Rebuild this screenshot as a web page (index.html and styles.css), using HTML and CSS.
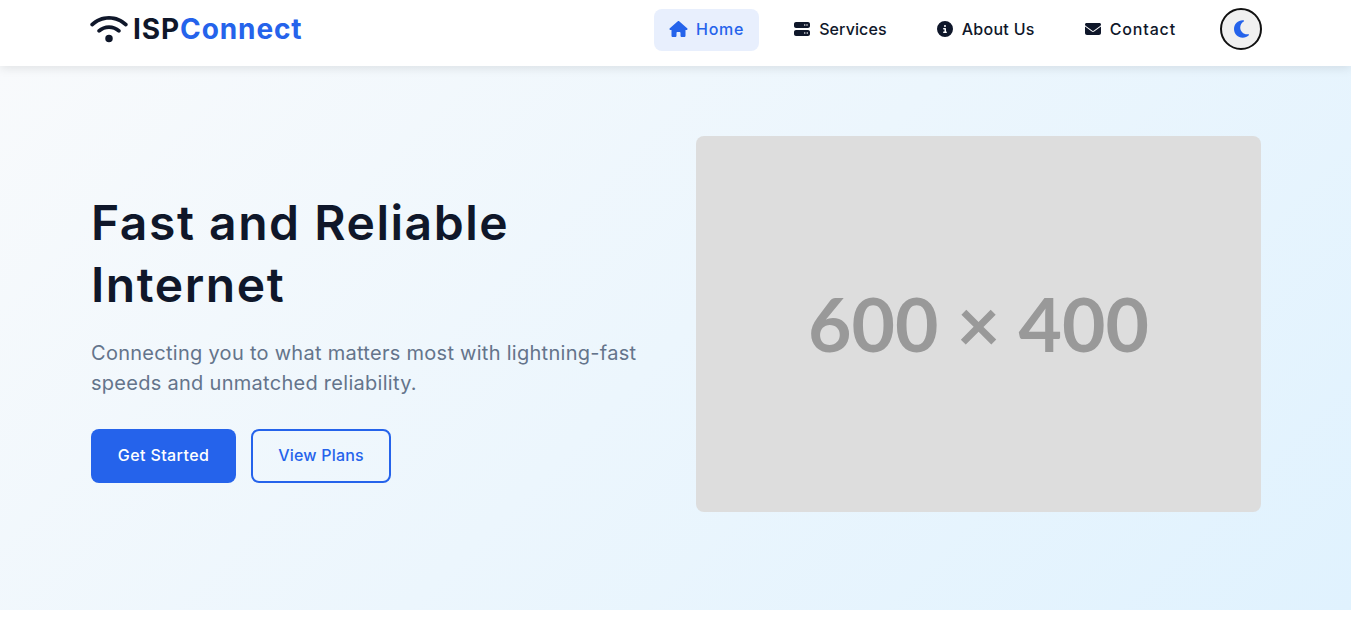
FILE: index.html
```html
<!DOCTYPE html>
<html lang="en">
<head>
  <meta charset="UTF-8" />
  <meta name="viewport" content="width=device-width, initial-scale=1.0" />
  <title>ISPConnect</title>
  <link rel="stylesheet" href="styles.css">
</head>
<body>
  <header class="header">
    <a class="logo" href="#">
      <svg class="logo-icon" viewBox="0 0 640 512"><path d="M54.2 202.9C123.2 136.7 216.8 96 320 96s196.8 40.7 265.8 106.9c12.8 12.2 33 11.8 45.2-.9s11.8-33-.9-45.2C549.7 79.5 440.4 32 320 32S90.3 79.5 9.8 156.7C-2.9 169-3.3 189.2 8.9 202s32.5 13.2 45.2 .9zM320 256c56.8 0 108.6 21.1 148.2 56 13.3 11.7 33.5 10.4 45.2-2.8s10.4-33.5-2.8-45.2C459.8 219.2 393 192 320 192s-139.800 27.200-190.500 72c-13.300 11.700-14.500 31.900-2.800 45.200s31.900 14.500 45.200 2.800c39.500-34.900 91.300-56 148.100-56zm64 160a64 64 0 1 0 -128 0 64 64 0 1 0 128 0z"/></svg>
      <span>ISP<span class="logo-accent">Connect</span></span>
    </a>
    <nav class="nav">
      <a class="nav-link nav-home active" href="#">
        <svg class="nav-icon icon-home" viewBox="0 0 576 512"><path d="M575.800 255.500c0 18-15 32.100-32 32.100h-32l.7 160.200c0 2.700-.2 5.400-.5 8.100V472c0 22.100-17.900 40-40 40H456c-1.100 0-2.200 0-3.300-.1-1.400 .1-2.800 .1-4.200 .1H416 392c-22.100 0-40-17.900-40-40V448 384c0-17.700-14.300-32-32-32H256c-17.700 0-32 14.300-32 32v64 24c0 22.100-17.900 40-40 40H160 128.100c-1.500 0-3-.1-4.500-.2-1.200 .1-2.400 .2-3.600 .2H104c-22.100 0-40-17.900-40-40V360c0-.9 0-1.900 .1-2.800V287.600H32c-18 0-32-14-32-32.100 0-9 3-17 10-24L266.400 8c7-7 15-8 22-8s15 2 21 7L564.800 231.500c8 7 12 15 11 24z"/></svg>
        Home
      </a>
      <a class="nav-link" href="#">
        <svg class="nav-icon" viewBox="0 0 512 512"><path d="M64 32C28.700 32 0 60.700 0 96v64c0 35.300 28.700 64 64 64H448c35.300 0 64-28.700 64-64V96c0-35.300-28.700-64-64-64H64zm280 72a24 24 0 1 1 0 48 24 24 0 1 1 0-48zm48 24a24 24 0 1 1 48 0 24 24 0 1 1 -48 0zM64 288c-35.300 0-64 28.700-64 64v64c0 35.300 28.700 64 64 64H448c35.300 0 64-28.700 64-64V352c0-35.300-28.700-64-64-64H64zm280 72a24 24 0 1 1 0 48 24 24 0 1 1 0-48zm56 24a24 24 0 1 1 48 0 24 24 0 1 1 -48 0z"/></svg>
        Services
      </a>
      <a class="nav-link nav-about" href="#">
        <svg class="nav-icon" viewBox="0 0 512 512"><path d="M256 512A256 256 0 1 0 256 0a256 256 0 1 0 0 512zM216 336h24V272H216c-13.300 0-24-10.700-24-24s10.700-24 24-24h48c13.300 0 24 10.700 24 24v88h8c13.300 0 24 10.700 24 24s-10.700 24-24 24H216c-13.300 0-24-10.700-24-24s10.700-24 24-24zm40-208a32 32 0 1 1 0 64 32 32 0 1 1 0-64z"/></svg>
        About Us
      </a>
      <a class="nav-link nav-contact" href="#">
        <svg class="nav-icon" viewBox="0 0 512 512"><path d="M48 64C21.500 64 0 85.500 0 112c0 15.100 7.100 29.300 19.200 38.400L236.800 313.600c11.400 8.500 27 8.500 38.400 0L492.800 150.400c12.100-9.100 19.200-23.300 19.200-38.400 0-26.500-21.500-48-48-48H48zM0 176V384c0 35.300 28.700 64 64 64H448c35.300 0 64-28.700 64-64V176L294.400 339.200c-22.800 17.100-54 17.100-76.800 0L0 176z"/></svg>
        Contact
      </a>
      <button class="theme-toggle" type="button" aria-label="Toggle theme">
        <svg class="moon" viewBox="0 0 384 512"><path d="M223.500 32C100 32 0 132.300 0 256s100 224 223.500 224c60.600 0 115.500-24.200 155.800-63.400 5-4.900 6.300-12.500 3.100-18.700s-10.100-9.700-17-8.500c-9.800 1.700-19.800 2.600-30.100 2.600-96.900 0-175.500-78.800-175.500-176 0-65.800 36-123.100 89.300-153.300 6.100-3.500 9.200-10.500 7.700-17.300s-7.300-11.900-14.300-12.500c-6.300-.5-12.600-.8-19-.8z"/></svg>
      </button>
    </nav>
  </header>

  <section class="hero">
    <div class="hero-text">
      <h1>Fast and Reliable Internet</h1>
      <p>Connecting you to what matters most with lightning-fast speeds and unmatched reliability.</p>
      <div class="hero-buttons">
        <a class="btn btn-primary" href="#">Get Started</a>
        <a class="btn btn-outline" href="#">View Plans</a>
      </div>
    </div>
    <div class="hero-image">600 × 400</div>
  </section>
</body>
</html>
```

FILE: styles.css
```css
* { box-sizing: border-box; margin: 0; padding: 0; }
body {
  font-family: Inter, 'Noto Sans', sans-serif;
  background: #fff;
  color: #0f172a;
  margin-right: 2px;
  overflow: hidden;
}
a { text-decoration: none; color: inherit; }

.header {
  position: relative; z-index: 10;
  height: 66px;
  padding: 0 90px;
  display: flex; align-items: center; justify-content: space-between;
  background: #fff;
  box-shadow: 0 2px 10px rgba(0, 0, 0, 0.1);
}
.logo {
  display: flex; align-items: center; gap: 5px;
  margin-bottom: 8px;
  font-size: 28px; font-weight: 700; letter-spacing: 0.9px;
}
.logo-icon { width: 38px; height: 30px; fill: #0f172a; }
.logo-accent { color: #2563eb; }

.nav { display: flex; align-items: center; gap: 20px; margin-bottom: 6px; }
.nav-link {
  display: flex; align-items: center; gap: 9px;
  height: 42px; padding: 0 15px 2px;
  border-radius: 8px;
  font-size: 16px; font-weight: 450;
  letter-spacing: 0.1px;
}
.nav-link.active { background: #e8effd; color: #2563eb; }
.nav-home { letter-spacing: 0.75px; gap: 8px; }
.nav-about { letter-spacing: 0.3px; }
.nav-contact { letter-spacing: 0.85px; }
.nav-icon { width: 16px; height: 16px; fill: currentColor; }
.icon-home { width: 19px; }
.theme-toggle {
  width: 42px; height: 42px;
  margin: 0 -1px 2px 9px;
  display: flex; align-items: center; justify-content: center;
  border: 2px solid #111; border-radius: 50%;
  background: #f0f0f0;
}
.moon { width: 15px; height: 20px; fill: #2563eb; }

.hero {
  height: 544px;
  padding: 70px 90px 98px 91px;
  display: grid; grid-template-columns: 1fr 565px; gap: 59px;
  align-items: center;
  background: linear-gradient(135deg, #f8fafc, #e0f2fe);
}
.hero-text { padding-top: 27px; }
h1 {
  font-size: 48px; font-weight: 600; line-height: 62px;
  letter-spacing: 1.55px;
  margin-bottom: 22px;
}
.hero-text p {
  font-size: 20px; line-height: 30px;
  letter-spacing: 0.28px;
  color: #64748b;
  margin-bottom: 31px;
}
.hero-buttons { display: flex; gap: 15px; }
.btn {
  display: flex; align-items: center; justify-content: center;
  height: 54px;
  padding-bottom: 2px;
  border-radius: 8px;
  font-size: 16px; font-weight: 500;
}
.btn-primary { width: 145px; background: #2563eb; color: #fff; letter-spacing: 0.4px; }
.btn-outline { width: 140px; border: 2px solid #2563eb; color: #2563eb; letter-spacing: 0.2px; font-weight: 450; }
.hero-image {
  height: 376px;
  padding-bottom: 2px;
  display: flex; align-items: center; justify-content: center;
  border-radius: 8px;
  background: #ddd;
  color: #999;
  font-family: Lato, sans-serif;
  font-size: 75px; font-weight: 700;
}
```
